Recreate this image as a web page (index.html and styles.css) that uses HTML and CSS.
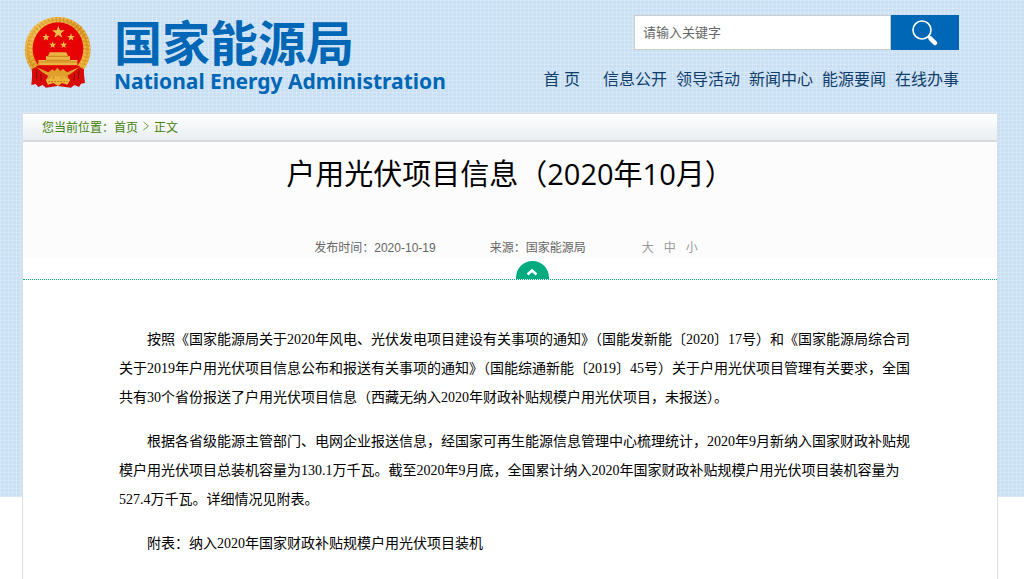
FILE: index.html
```html
<!DOCTYPE html>
<html lang="zh-CN">
<head>
<meta charset="utf-8">
<title>户用光伏项目信息（2020年10月）</title>
<link rel="stylesheet" href="styles.css">
</head>
<body>
<div class="page">
  <header class="header">
    <div class="brand">
      <svg class="emblem" viewBox="27 18 204 216" aria-hidden="true">
        <defs>
          <path id="star" d="M0-10 2.4-3.2 9.5-3.1 3.8 1.2 5.9 8.1 0 4 -5.9 8.1 -3.8 1.2 -9.5-3.1 -2.4-3.2Z"/>
          <linearGradient id="gold" x1="0" y1="0" x2="1" y2="1">
            <stop offset="0" stop-color="#f3c95a"/>
            <stop offset=".5" stop-color="#d9921e"/>
            <stop offset="1" stop-color="#f0b83c"/>
          </linearGradient>
        </defs>
        <path d="M53 178 49 225 62 222 70 231 84 224 92 233 128 228 168 233 178 225 192 231 198 221 210 219 205 176Z" fill="#d50b08"/>
        <circle cx="128" cy="119" r="99" fill="url(#gold)"/>
        <circle cx="128" cy="119" r="90" fill="none" stroke="#a9660c" stroke-width="13" stroke-dasharray="3 8" opacity=".35"/>
        <circle cx="128" cy="119" r="82" fill="none" stroke="#ffe28a" stroke-width="9" stroke-dasharray="5 7" opacity=".4"/>
        <circle cx="128" cy="119" r="95" fill="none" stroke="#ffe08a" stroke-width="4" stroke-dasharray="6 6" opacity=".5"/>
        <ellipse cx="129" cy="116" rx="76" ry="79" fill="#e60205"/>
        <g fill="#eec04a">
          <use href="#star" transform="translate(130 67) scale(2)"/>
          <use href="#star" transform="translate(93 82) scale(1.2)"/>
          <use href="#star" transform="translate(168 82) scale(1.2)"/>
          <use href="#star" transform="translate(113 105) scale(1.1)"/>
          <use href="#star" transform="translate(146 105) scale(1.1)"/>
        </g>
        <path d="M104 127H154L159 138H165V150H187V166H70V150H93V138H99Z" fill="#eab441"/>
        <path d="M96 139H162M92 151H166M70 156H187" stroke="#b96c0e" stroke-width="2"/>
        <path d="M62 167H196L177 188 160 197H98L80 188Z" fill="#df0705"/>
        <path d="M56 170 70 174 100 187 112 178 119 183 127 173 136 183 144 177 156 187 186 174 200 170 178 193 149 199H108L80 193Z" fill="#e0a02b"/>
        <path d="M50 178 64 171 82 187 99 197 87 230 78 213 72 231 63 212 54 224ZM207 178 193 171 174 187 158 197 170 231 178 213 187 229 193 212 205 219Z" fill="#d80c0a"/>
        <path d="M65 180 65 207M77 192 79 212M192 180 190 207M179 192 177 211" stroke="#8f0604" stroke-width="3"/>
        <path d="M92 209 109 203 117 209 128 199 139 209 149 203 166 209 157 224 141 219 129 228 115 219 99 224Z" fill="#f0b63b"/>
        <path d="M100 215H157" stroke="#b66c10" stroke-width="3" stroke-dasharray="5 4"/>
      </svg>
      <div class="brand-text">
        <div class="brand-cn">国家能源局</div>
        <div class="brand-en">National Energy Administration</div>
      </div>
    </div>
    <div class="tools">
      <form class="search">
        <input class="search-box" type="text" placeholder="请输入关键字" aria-label="请输入关键字">
        <button class="search-button" type="button" aria-label="搜索">
          <svg class="search-icon" viewBox="0 0 28 28" aria-hidden="true">
            <circle cx="11" cy="11" r="9" fill="none" stroke="#fff" stroke-width="1.6"/>
            <path d="M17 17 19 19" stroke="#fff" stroke-width="2"/>
            <path d="M19.500 19.500 24 24" stroke="#fff" stroke-width="4.500" stroke-linecap="round"/>
          </svg>
        </button>
      </form>
      <nav class="nav">
        <a class="nav-home" href="#">首 页</a>
        <a href="#">信息公开</a>
        <a href="#">领导活动</a>
        <a href="#">新闻中心</a>
        <a href="#">能源要闻</a>
        <a href="#">在线办事</a>
      </nav>
    </div>
  </header>
  <main class="panel">
    <nav class="crumbs">
      <span>您当前位置：</span>
      <a href="#">首页</a>
      <svg class="crumb-arrow" viewBox="0 0 6 10" aria-hidden="true"><path d="M.5 1 5.500 5 .5 9" fill="none" stroke="#6ea33a"/></svg>
      <a href="#">正文</a>
    </nav>
    <div class="heading">
      <h1 class="title">户用光伏项目信息（2020年10月）</h1>
      <div class="meta">
        <span>发布时间：2020-10-19</span>
        <span class="source">来源：国家能源局</span>
        <span class="sizes">
          <button type="button">大</button>
          <button type="button">中</button>
          <button type="button">小</button>
        </span>
      </div>
    </div>
    <div class="divider">
      <button class="fold" type="button" aria-label="收起">
        <svg class="fold-icon" viewBox="0 0 12 8" aria-hidden="true"><path d="M1.500 6.500 6 2.500 10.500 6.500" fill="none" stroke="#fff" stroke-width="2.600"/></svg>
      </button>
    </div>
    <article class="article">
      <p>按照《国家能源局关于2020年风电、光伏发电项目建设有关事项的通知》（国能发新能〔2020〕17号）和《国家能源局综合司关于2019年户用光伏项目信息公布和报送有关事项的通知》（国能综通新能〔2019〕45号）关于户用光伏项目管理有关要求，全国共有30个省份报送了户用光伏项目信息（西藏无纳入2020年财政补贴规模户用光伏项目，未报送）。</p>
      <p>根据各省级能源主管部门、电网企业报送信息，经国家可再生能源信息管理中心梳理统计，2020年9月新纳入国家财政补贴规模户用光伏项目总装机容量为130.1万千瓦。截至2020年9月底，全国累计纳入2020年国家财政补贴规模户用光伏项目装机容量为527.4万千瓦。详细情况见附表。</p>
      <p>附表：纳入2020年国家财政补贴规模户用光伏项目装机</p>
    </article>
  </main>
</div>
</body>
</html>
```
FILE: styles.css
```css
* {
  box-sizing: border-box;
}

body {
  margin: 0;
  font-family: "Liberation Sans", "Noto Sans CJK SC", sans-serif;
  font-size: 12px;
  color: #000;
  background:
    linear-gradient(transparent 497px, #fff 497px),
    repeating-linear-gradient(90deg, rgba(255, 255, 255, 0.22) 0 1px, transparent 1px 4px),
    repeating-linear-gradient(rgba(255, 255, 255, 0.22) 0 1px, transparent 1px 4px),
    #c9dff3;
}

a {
  color: inherit;
  text-decoration: none;
}

button {
  padding: 0;
  border: 0;
  background: none;
  color: inherit;
  font: inherit;
}

svg {
  display: block;
}

.page {
  margin: 0 26px 0 22px;
}

.header {
  display: flex;
  justify-content: space-between;
  height: 113px;
  padding: 15px 39px 0 2px;
}

.brand {
  display: flex;
  gap: 22px;
}

.emblem {
  width: 68px;
  height: 74px;
}

.brand-text {
  color: #0067b6;
  font-family: "Noto Sans", "Noto Sans CJK SC", sans-serif;
  font-weight: bold;
  white-space: nowrap;
}

.brand-cn {
  font-family: "Noto Sans CJK SC", sans-serif;
  font-size: 48px;
  line-height: 50px;
}

.brand-en {
  font-size: 21px;
  line-height: 32px;
}

.tools {
  display: flex;
  flex-direction: column;
  align-items: flex-end;
  gap: 18px;
}

.search {
  display: flex;
  width: 325px;
  height: 35px;
}

.search-box {
  flex: 1;
  min-width: 0;
  padding: 0 8px 2px;
  border: 1px solid #ccc;
  border-radius: 0;
  background: #fff;
  font: 13px "Noto Sans CJK SC", sans-serif;
}

.search-box::placeholder {
  color: #666;
}

.search-button {
  display: flex;
  align-items: center;
  justify-content: center;
  width: 68px;
  background: #0067b6;
}

.search-icon {
  width: 28px;
  height: 28px;
}

.nav {
  display: flex;
  gap: 9px;
  color: #103e6c;
  font-size: 16px;
  line-height: 24px;
  white-space: nowrap;
}

.nav-home {
  margin-right: 14px;
}

.panel {
  border: 1px solid #dcdfe1;
  border-bottom: 0;
  background: #fff;
}

.crumbs {
  display: flex;
  align-items: center;
  height: 28px;
  padding: 0 0 2px 19px;
  border-bottom: 2px solid #d6dadc;
  background: linear-gradient(#fff, #e9eef2);
  color: #438109;
}

.crumb-arrow {
  width: 6px;
  height: 10px;
  margin: 0 5px;
}

.heading {
  padding-top: 10px;
  background: #fcfcfc;
}

.title {
  margin: 0;
  font: 29px/44px "Open Sans", "Noto Sans CJK SC", sans-serif;
  text-align: center;
}

.meta {
  display: flex;
  justify-content: center;
  margin-top: 42px;
  padding-right: 8px;
  color: #666;
  line-height: 20px;
}

.source {
  margin-left: 54px;
}

.sizes {
  display: flex;
  gap: 10px;
  margin-left: 56px;
  color: #999;
}

.divider {
  display: flex;
  justify-content: center;
  padding: 3px 0 0 44px;
  border-bottom: 1px dotted #00a97f;
}

.fold {
  display: flex;
  align-items: center;
  justify-content: center;
  width: 33px;
  height: 18px;
  border-radius: 17px 17px 0 0;
  background: #00ab80;
}

.fold-icon {
  width: 12px;
  height: 8px;
  margin-top: 4px;
}

.article {
  padding: 45px 79px 16px 96px;
  font: 14px/29px "Liberation Serif", "Noto Sans CJK SC", sans-serif;
}

.article p {
  margin: 0 0 15px;
  text-indent: 28px;
}
```
